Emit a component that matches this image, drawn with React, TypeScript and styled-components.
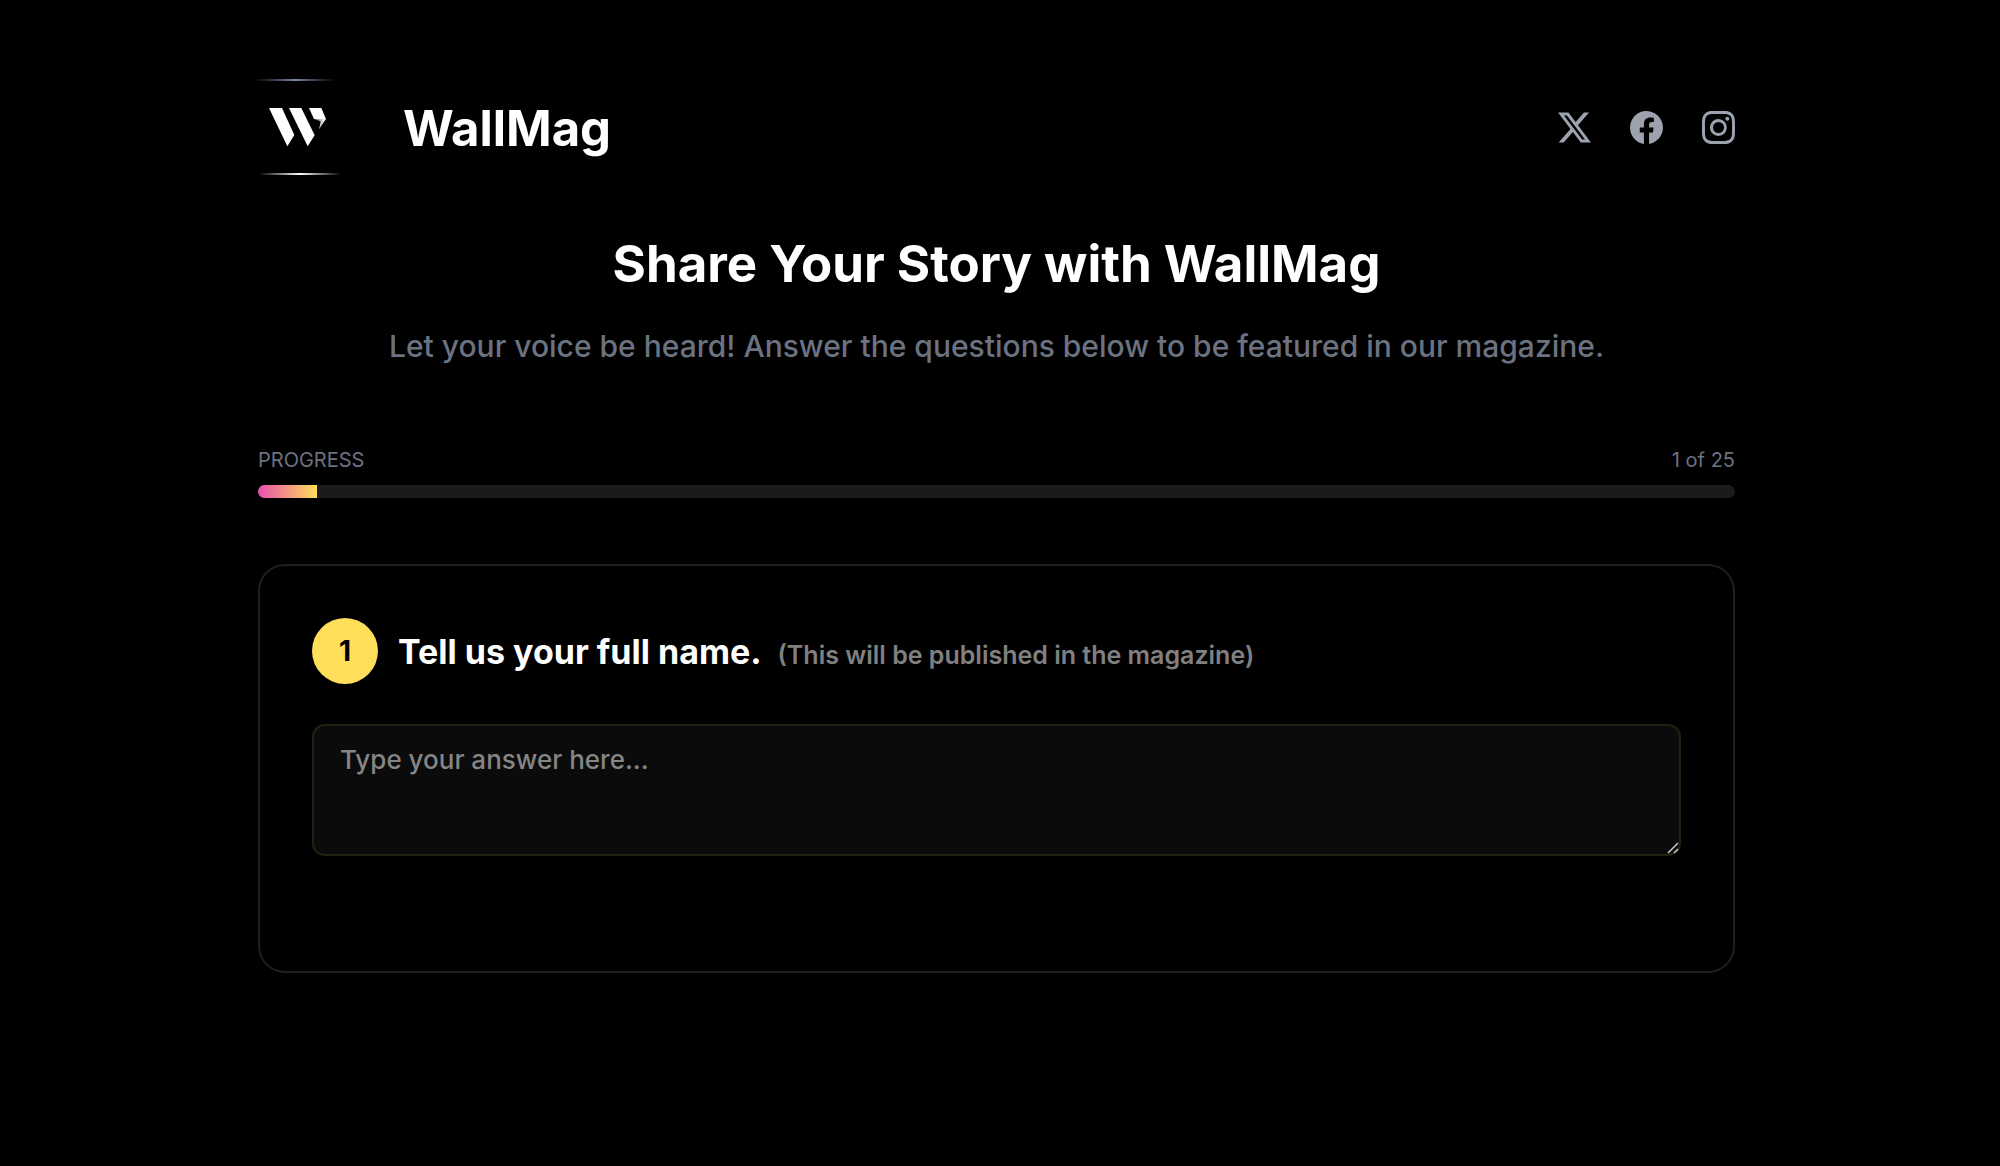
import React, { useState } from "react";
import styled, { createGlobalStyle } from "styled-components";
import { BsTwitterX, BsFacebook, BsInstagram } from "react-icons/bs";

const GlobalStyle = createGlobalStyle`
  *, *::before, *::after { box-sizing: border-box; }
  body {
    margin: 0;
    background: #000;
    color: #fff;
    font-family: Inter, "Noto Sans", sans-serif;
  }
  h1, h2, p { margin: 0; }
`;

const Page = styled.div`
  min-height: 100vh;
  padding: 78px 39px 80px 32px;
`;

const Container = styled.div`
  max-width: 1477px;
  margin: 0 auto;
`;

const Header = styled.header`
  display: flex;
  align-items: center;
  justify-content: space-between;
`;

const Brand = styled.a`
  display: flex;
  align-items: center;
  gap: 61px;
  color: #fff;
  text-decoration: none;
`;

const LogoMark = styled.svg`
  display: block;
  width: 84px;
  height: 98px;
  overflow: visible;
`;

const Wordmark = styled.span`
  font-size: 49px;
  line-height: 56px;
  font-weight: 700;
  padding-top: 4px;
`;

const SocialNav = styled.nav`
  display: flex;
  gap: 39px;
`;

const SocialLink = styled.a`
  display: flex;
  color: #9ca3af;
  font-size: 33px;
`;

const Intro = styled.section`
  margin-top: 56px;
  text-align: center;
`;

const Title = styled.h1`
  font-size: 51px;
  line-height: 64px;
  font-weight: 700;
`;

const Subtitle = styled.p`
  margin-top: 30px;
  font-size: 30px;
  line-height: 40px;
  font-weight: 500;
  color: #6b7280;
`;

const Progress = styled.section`
  margin-top: 82px;
`;

const ProgressLabels = styled.div`
  display: flex;
  justify-content: space-between;
  font-size: 20px;
  line-height: 24px;
  font-weight: 400;
  color: #6b7280;
`;

const Track = styled.div`
  margin-top: 13px;
  height: 13px;
  border-radius: 7px;
  background: #1b1b1b;
  overflow: hidden;
`;

const Fill = styled.div`
  height: 100%;
  background: linear-gradient(90deg, #e84fae, #ffde59);
`;

const Card = styled.form`
  margin-top: 66px;
  padding: 52px;
  padding-bottom: 115px;
  border: 2px solid #1f1f1f;
  border-radius: 27px;
`;

const QuestionRow = styled.div`
  display: flex;
  align-items: center;
  gap: 20px;
`;

const NumberBadge = styled.span`
  display: flex;
  align-items: center;
  justify-content: center;
  width: 66px;
  height: 66px;
  border-radius: 50%;
  background: #ffde59;
  color: #000;
  font-size: 28px;
  font-weight: 700;
`;

const QuestionLabel = styled.label`
  display: flex;
  align-items: baseline;
  flex-wrap: wrap;
  column-gap: 16px;
  padding-top: 4px;
  font-size: 34px;
  line-height: 40px;
  font-weight: 700;
`;

const Hint = styled.span`
  font-size: 25px;
  font-weight: 600;
  color: #808080;
`;

const AnswerBox = styled.div`
  position: relative;
  margin-top: 40px;
`;

const Answer = styled.textarea`
  display: block;
  width: 100%;
  height: 132px;
  padding: 16px 26px;
  border: 2px solid #252112;
  border-radius: 13px;
  outline: none;
  background: #0b0b0b;
  color: #fff;
  font-family: inherit;
  font-size: 26px;
  line-height: 36px;
  font-weight: 500;
  resize: vertical;
  &::placeholder { color: #858585; opacity: 1; }
  &::-webkit-resizer { background: transparent; }
`;

const Grip = styled.svg`
  position: absolute;
  right: 2px;
  bottom: 2px;
  width: 12px;
  height: 12px;
  pointer-events: none;
`;

const socials = [
  { name: "X", Icon: BsTwitterX },
  { name: "Facebook", Icon: BsFacebook },
  { name: "Instagram", Icon: BsInstagram },
];

function Logo() {
  return (
    <LogoMark viewBox="54 54 252 294" aria-hidden="true">
      <defs>
        <linearGradient id="lineTop">
          <stop offset="0" stopColor="#64748b" stopOpacity="0" />
          <stop offset="0.5" stopColor="#7c89a3" />
          <stop offset="1" stopColor="#64748b" stopOpacity="0" />
        </linearGradient>
        <linearGradient id="lineBottom">
          <stop offset="0" stopColor="#fff" stopOpacity="0" />
          <stop offset="0.5" stopColor="#fff" />
          <stop offset="1" stopColor="#fff" stopOpacity="0" />
        </linearGradient>
        <linearGradient id="tail">
          <stop offset="0" stopColor="#777" />
          <stop offset="1" stopColor="#fff" />
        </linearGradient>
      </defs>
      <rect x="42" y="57" width="246" height="6" fill="url(#lineTop)" />
      <rect x="57" y="339" width="246" height="6" fill="url(#lineBottom)" />
      <g fill="#fff">
        <path d="M87 144H126L163 225L142 259Z" />
        <path d="M147 144H184L224 226L203 259Z" />
        <path d="M207 144H244L258 177H222Z" />
      </g>
      <path d="M222 177H258L237 208L242 184Z" fill="url(#tail)" />
    </LogoMark>
  );
}

export default function App() {
  const [answer, setAnswer] = useState("");
  const current = 1;
  const total = 25;

  return (
    <>
      <GlobalStyle />
      <Page>
        <Container>
          <Header>
            <Brand href="#">
              <Logo />
              <Wordmark>WallMag</Wordmark>
            </Brand>
            <SocialNav aria-label="Social media">
              {socials.map(({ name, Icon }) => (
                <SocialLink key={name} href="#" aria-label={name}>
                  <Icon />
                </SocialLink>
              ))}
            </SocialNav>
          </Header>
          <main>
            <Intro>
              <Title>Share Your Story with WallMag</Title>
              <Subtitle>
                Let your voice be heard! Answer the questions below to be featured in our magazine.
              </Subtitle>
            </Intro>
            <Progress>
              <ProgressLabels>
                <span>PROGRESS</span>
                <span>{current} of {total}</span>
              </ProgressLabels>
              <Track role="progressbar" aria-label="Progress" aria-valuenow={current} aria-valuemin={0} aria-valuemax={total}>
                <Fill style={{ width: `${(current / total) * 100}%` }} />
              </Track>
            </Progress>
            <Card onSubmit={(e) => e.preventDefault()}>
              <QuestionRow>
                <NumberBadge>{current}</NumberBadge>
                <QuestionLabel htmlFor="answer">
                  Tell us your full name.
                  <Hint>(This will be published in the magazine)</Hint>
                </QuestionLabel>
              </QuestionRow>
              <AnswerBox>
                <Answer
                  id="answer"
                  placeholder="Type your answer here..."
                  value={answer}
                  onChange={(e) => setAnswer(e.target.value)}
                />
                <Grip viewBox="0 0 12 12" aria-hidden="true">
                  <path d="M1 11L11 1M7 11L11 7" stroke="#c4c4c4" strokeWidth="1.6" fill="none" />
                </Grip>
              </AnswerBox>
            </Card>
          </main>
        </Container>
      </Page>
    </>
  );
}
